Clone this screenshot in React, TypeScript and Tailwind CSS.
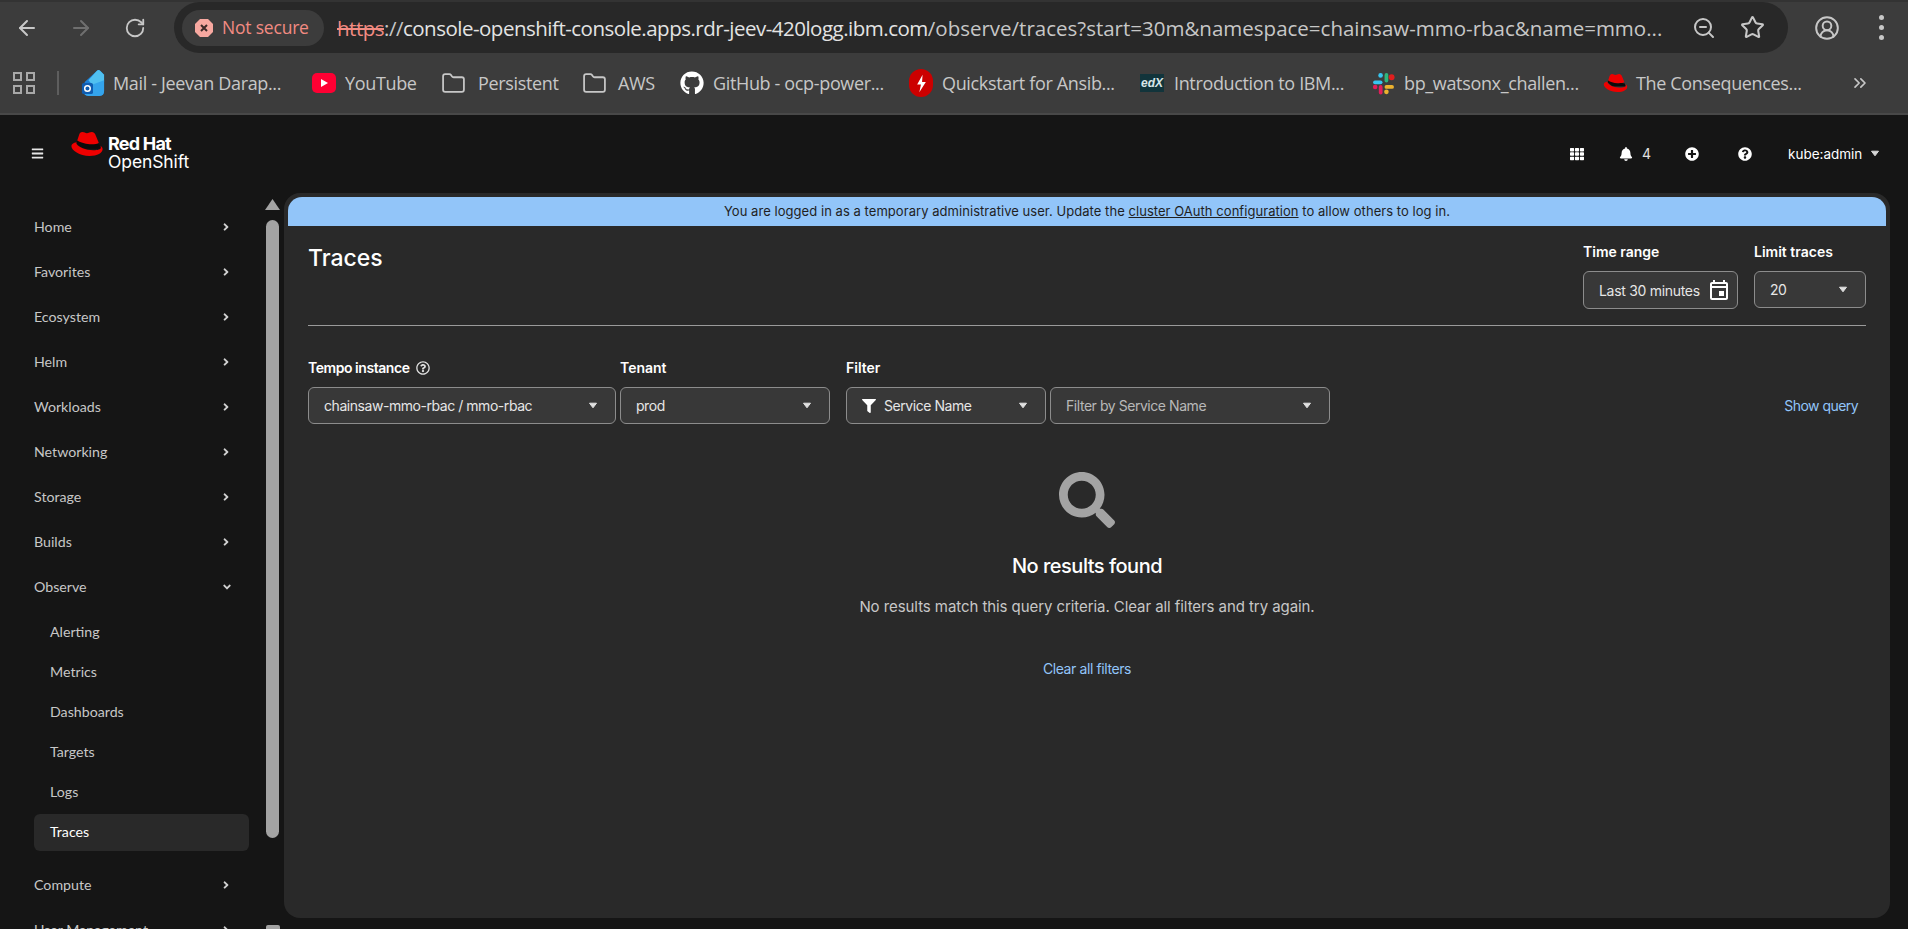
import React from "react";
import { ArrowLeft, ArrowRight, RotateCw, Folder, ZoomOut, Star, ChevronsRight, CircleUserRound } from "lucide-react";
import { FaBell, FaPlusCircle, FaQuestionCircle, FaTh, FaFilter, FaSearch, FaAngleRight, FaAngleDown, FaBars, FaGithub, FaRegQuestionCircle } from "react-icons/fa";
import { MdOutlineEvent } from "react-icons/md";

function Hat({ className }: { className: string }) {
  return (
    <svg viewBox="0 0 32 25" className={className}>
      <path fill="#0b0b0b" d="M6.5 9 L28 13 L29 17 L12 17 L6 12 Z" />
      <path fill="#ee0000" d="M20.5 1c-1.7 0-3 1.2-4.6 1.2C14.4 2.2 13.4 1 11.6 1 9.8 1 8.9 2.2 8.3 4L6.6 9.2c2.4 1.6 7 3.2 12 3.5 4 .2 7.600-.4 8.700-1.500L24.500 4.500C23.700 2.200 22.500 1 20.500 1z" />
      <path fill="#ee0000" d="M6 10.700C2.800 11.300 1 12.600 1 14.500 1 18.800 8.800 24 18.500 24 26 24 31 21 31 17.500c0-1.500-.9-2.500-2-3.300.3.700.4 1.100.4 1.600 0 1.700-2.900 2.700-7.400 2.700C14.500 18.500 8 15.500 6 12.500c-.3-.5-.2-1.200 0-1.800z" />
    </svg>
  );
}

function Slack() {
  return (
    <svg viewBox="0 0 24 24" className="w-[25px] h-[25px] shrink-0">
      <rect x="2" y="9" width="9" height="3.600" rx="1.800" fill="#36c5f0" />
      <circle cx="9.200" cy="4.200" r="2.200" fill="#36c5f0" />
      <rect x="13" y="2" width="3.600" height="9" rx="1.800" fill="#2eb67d" />
      <circle cx="19.800" cy="6" r="2.800" fill="#e01e1e" />
      <rect x="13" y="13.500" width="9" height="3.600" rx="1.800" fill="#ecb22e" />
      <circle cx="14.800" cy="20" r="2.200" fill="#ecb22e" />
      <rect x="7.500" y="13.500" width="3.600" height="9" rx="1.800" fill="#e01e5a" />
      <circle cx="4" cy="15.300" r="2.200" fill="#e01e5a" />
    </svg>
  );
}

function Outlook() {
  return (
    <svg viewBox="0 0 26 30" className="w-[24px] h-[28px] shrink-0">
      <path fill="#1c7fd8" d="M4 14 L17 2 Q19 0 21 2 L25 6 V24 Q25 29 20 29 H8 Q3 29 3 24 Z" />
      <path fill="#50c0f0" d="M17 2 Q19 0 21 2 L25 6 V14 L15 20 L8 12 Z" />
      <path fill="#34a4ec" d="M3 20 L14 16 L25 12 V24 Q25 29 20 29 H8 Q3 29 3 24 Z" />
      <rect x="1" y="15" width="12" height="12" rx="2" fill="#0f5cb0" />
      <circle cx="7" cy="21" r="3" fill="none" stroke="#ffffff" strokeWidth="1.600" />
    </svg>
  );
}

function Octagon() {
  return (
    <svg viewBox="0 0 20 20" className="w-[20px] h-[20px] shrink-0">
      <path fill="#f7a8a0" d="M6 1 H14 L19 6 V14 L14 19 H6 L1 14 V6 Z" />
      <path d="M7 7 L13 13 M13 7 L7 13" stroke="#3c2a28" strokeWidth="2" />
    </svg>
  );
}

function Caret({ className }: { className: string }) {
  return (
    <svg viewBox="0 0 10 7" className={"w-[10px] h-[7px] shrink-0 " + className}>
      <path d="M1.500 1.200 H8.500 L5 5.800 Z" fill="currentColor" stroke="currentColor" strokeWidth="1" strokeLinejoin="round" />
    </svg>
  );
}

function Bookmark({ icon, label, className }: { icon: React.ReactNode; label: string; className: string }) {
  return (
    <div className={"flex items-center shrink-0 " + className}>
      {icon}
      <span className="text-[18px] leading-[24px] text-[#c7c7c7] whitespace-nowrap [font-family:'Open_Sans',sans-serif] tracking-[-0.35px]">{label}</span>
    </div>
  );
}

function ChromeBars() {
  return (
    <div className="shrink-0">
      <div className="h-[53px] bg-[#3c3c3c] border-t-2 border-[#333333] flex items-center">
        <div className="w-[54px] flex justify-center"><ArrowLeft className="w-[24px] h-[24px] text-[#c7c7c7]" strokeWidth={2} /></div>
        <div className="w-[54px] flex justify-center"><ArrowRight className="w-[24px] h-[24px] text-[#6f6f6f]" strokeWidth={2} /></div>
        <div className="w-[54px] flex justify-center"><RotateCw className="w-[22px] h-[22px] text-[#c7c7c7]" strokeWidth={2} /></div>
        <div className="ml-[12px] w-[1614px] h-[51px] rounded-full bg-[#282828] flex items-center pl-[8px]">
          <div className="w-[142px] h-[36px] rounded-full bg-[#3c3c3c] flex items-center pl-[12px] gap-[8px] shrink-0">
            <Octagon />
            <span className="text-[#f28b82] text-[17.500px] font-medium whitespace-nowrap [font-family:'Open_Sans',sans-serif] tracking-[-0.2px]">Not secure</span>
          </div>
          <div className="ml-[13px] w-[1330px] shrink-0 text-[20.500px] leading-[30px] whitespace-nowrap overflow-hidden [font-family:'Open_Sans',sans-serif] tracking-[-0.5px]">
            <span className="text-[#f28b82] line-through">https</span>
            <span className="text-[#c7c7c7]">://</span>
            <span className="text-[#e3e3e3]">console-openshift-console.apps.rdr-jeev-420logg.ibm.com</span>
            <span className="text-[#c7c7c7] tracking-[0px]">/observe/traces?start=30m&amp;namespace=chainsaw-mmo-rbac&amp;name=mmo...</span>
          </div>
          <ZoomOut className="ml-[25px] w-[24px] h-[24px] text-[#c7c7c7] shrink-0" strokeWidth={2} />
          <Star className="ml-[24px] w-[25px] h-[25px] text-[#c7c7c7] shrink-0" strokeWidth={2} />
        </div>
        <div className="ml-[12px] w-[54px] flex justify-center"><CircleUserRound className="w-[26px] h-[26px] text-[#c7c7c7]" strokeWidth={1.800} /></div>
        <div className="w-[54px] flex flex-col items-center gap-[5px]">
          <span className="w-[5px] h-[5px] rounded-full bg-[#c7c7c7]" />
          <span className="w-[5px] h-[5px] rounded-full bg-[#c7c7c7]" />
          <span className="w-[5px] h-[5px] rounded-full bg-[#c7c7c7]" />
        </div>
      </div>
      <div className="h-[62px] bg-[#3c3c3c] border-b-2 border-[#484848] flex items-center">
        <div className="ml-[13px] w-[22px] h-[22px] grid grid-cols-2 gap-[4px] shrink-0">
          <span className="border-2 border-[#a8a8a8]" />
          <span className="border-2 border-[#a8a8a8]" />
          <span className="border-2 border-[#a8a8a8]" />
          <span className="border-2 border-[#a8a8a8]" />
        </div>
        <span className="ml-[22px] w-[2px] h-[24px] bg-[#5e5e5e] shrink-0" />
        <Bookmark className="ml-[22px] w-[231px] gap-[8px]" icon={<Outlook />} label="Mail - Jeevan Darap..." />
        <Bookmark className="w-[129px] gap-[9px]" icon={<span className="w-[24px] h-[20px] rounded-[5px] bg-[#ff0033] flex items-center justify-center"><span className="w-0 h-0 border-y-[4px] border-y-transparent border-l-[7px] border-l-white" /></span>} label="YouTube" />
        <Bookmark className="w-[141px] gap-[12px]" icon={<Folder className="w-[25px] h-[25px] text-[#c7c7c7]" strokeWidth={1.700} />} label="Persistent" />
        <Bookmark className="w-[98px] gap-[11px]" icon={<Folder className="w-[25px] h-[25px] text-[#c7c7c7]" strokeWidth={1.700} />} label="AWS" />
        <Bookmark className="w-[229px] gap-[9px]" icon={<FaGithub className="w-[24px] h-[24px] text-white" />} label="GitHub - ocp-power..." />
        <Bookmark className="w-[231px] gap-[9px]" icon={<span className="w-[24px] h-[28px] rounded-full bg-[#cc0000] flex items-center justify-center"><svg viewBox="0 0 12 16" className="w-[13px] h-[19px]"><path fill="#ffffff" d="M7 0 L2 9 H5.500 L4 16 L10 6.500 H6.500 Z" /></svg></span>} label="Quickstart for Ansib..." />
        <Bookmark className="w-[231px] gap-[10px]" icon={<span className="w-[24px] h-[18px] bg-[#12343b] text-[#d8e6e8] text-[12px] leading-[18px] italic font-bold text-center [font-family:'Liberation_Sans',sans-serif]">edX</span>} label="Introduction to IBM..." />
        <Bookmark className="w-[232px] gap-[8px]" icon={<Slack />} label="bp_watsonx_challen..." />
        <Bookmark className="w-[247px] gap-[8px]" icon={<Hat className="w-[25px] h-[20px] shrink-0" />} label="The Consequences..." />
        <ChevronsRight className="w-[20px] h-[20px] text-[#c7c7c7] shrink-0" strokeWidth={2} />
      </div>
    </div>
  );
}

function Masthead() {
  return (
    <div className="h-[78px] shrink-0 flex items-center text-[#e0e0e0] pr-[28px] pb-[1px]">
      <FaBars className="ml-[31px] w-[13px] h-[13px] text-[#e6e6e6] shrink-0" />
      <div className="ml-[26px] flex items-start relative">
        <Hat className="w-[34px] h-[26px] mt-[-6px] shrink-0" />
        <div className="ml-[4px] flex flex-col mt-[-2px] text-white [font-family:'Inter',sans-serif]">
          <span className="text-[18px] leading-[18px] font-bold tracking-[-0.8px]">Red Hat</span>
          <span className="text-[17.500px] leading-[18px] font-normal tracking-[-0.1px]">OpenShift</span>
        </div>
      </div>
      <FaTh className="ml-auto w-[14px] h-[14px] text-white shrink-0" />
      <FaBell className="ml-[35px] w-[14px] h-[14px] text-white shrink-0" />
      <span className="ml-[9px] w-[8px] text-[14px] leading-[20px] text-[#e0e0e0] [font-family:'Inter',sans-serif]">4</span>
      <FaPlusCircle className="ml-[35px] w-[14px] h-[14px] text-white shrink-0" />
      <FaQuestionCircle className="ml-[39px] w-[14px] h-[14px] text-white shrink-0" />
      <span className="ml-[36px] w-[72px] whitespace-nowrap text-[13.500px] leading-[20px] text-white [font-family:'Inter',sans-serif]">kube:admin</span>
      <Caret className="ml-[10px] text-[#d8d8d8]" />
    </div>
  );
}

function NavItem({ label, open }: { label: string; open?: boolean }) {
  return (
    <div className="h-[45px] flex items-center justify-between pl-[34px] pr-[30px] text-[14.200px] text-[#c7c7c7]">
      <span>{label}</span>
      {open ? <FaAngleDown className="w-[12px] h-[12px] text-[#d0d0d0] mr-[-1px]" /> : <FaAngleRight className="w-[12px] h-[12px] text-[#d0d0d0]" />}
    </div>
  );
}

function SubItem({ label, active }: { label: string; active?: boolean }) {
  return (
    <div className="h-[40px] flex items-center ml-[34px] mr-[13px]">
      <div className={active ? "w-full h-[37px] flex items-center pl-[16px] rounded-[6px] bg-[#292929] text-white text-[14.200px]" : "w-full pl-[16px] text-[#c7c7c7] text-[14.200px]"}>{label}</div>
    </div>
  );
}

function Sidebar() {
  return (
    <aside className="w-[284px] shrink-0 flex [font-family:'Lato',sans-serif] overflow-hidden">
      <div className="w-[262px] shrink-0 pt-[11px]">
        {["Home", "Favorites", "Ecosystem", "Helm", "Workloads", "Networking", "Storage", "Builds"].map((l) => (
          <NavItem key={l} label={l} />
        ))}
        <NavItem label="Observe" open />
        <div className="pt-[3px] pb-[10px]">
          {["Alerting", "Metrics", "Dashboards", "Targets", "Logs"].map((l) => (
            <SubItem key={l} label={l} />
          ))}
          <SubItem label="Traces" active />
        </div>
        <NavItem label="Compute" />
        <NavItem label="User Management" />
      </div>
      <div className="w-[15px] ml-[3px] shrink-0 flex flex-col items-center pt-[6px]">
        <span className="w-[15px] h-[11px] shrink-0 bg-[#a3a3a3] [clip-path:polygon(50%_0,100%_100%,0_100%)]" />
        <span className="mt-[10px] w-[13px] h-[618px] rounded-full bg-[#a3a3a3] shrink-0" />
        <span className="mt-[87px] w-[14px] h-[20px] rounded-[2px] bg-[#a3a3a3] shrink-0" />
      </div>
    </aside>
  );
}

function Select({ className, label, muted, icon }: { className: string; label: string; muted?: boolean; icon?: React.ReactNode }) {
  return (
    <div className={"h-[37px] border border-[#8c8c8c] rounded-[6px] bg-[#383838] flex items-center pl-[15px] pr-[17px] text-[14px] tracking-[-0.45px] shrink-0 " + className}>
      {icon}
      <span className={muted ? "text-[#b8b8b8] whitespace-nowrap" : "text-[#e6e6e6] whitespace-nowrap"}>{label}</span>
      <Caret className="ml-auto text-[#e0e0e0]" />
    </div>
  );
}

function Label({ children, className }: { children: React.ReactNode; className?: string }) {
  return <div className={"h-[20px] mb-[9px] text-[14px] leading-[20px] font-semibold text-white whitespace-nowrap flex items-center " + (className ?? "")}>{children}</div>;
}

function Main() {
  return (
    <main className="w-[1606px] h-[725px] shrink-0 rounded-[16px] bg-[#292929] p-[4px] [font-family:'Inter',sans-serif]">
      <div className="h-[29px] rounded-t-[14px] bg-[#92c5f9] flex items-center justify-center text-[13px] text-[#1f1f1f] whitespace-nowrap tracking-[0.05px]">
        <span>You are logged in as a temporary administrative user. Update the <span className="underline">cluster OAuth configuration</span> to allow others to log in.</span>
      </div>
      <div className="px-[20px]">
        <div className="pt-[16px] flex items-start">
          <h1 className="text-[23px] leading-[32px] font-medium text-white">Traces</h1>
          <div className="ml-auto flex gap-[16px]">
            <div>
              <Label>Time range</Label>
              <div className="w-[155px] h-[38px] border border-[#8c8c8c] rounded-[6px] bg-[#383838] flex items-center pl-[15px] text-[14px] tracking-[-0.3px] text-[#e6e6e6] whitespace-nowrap">
                <span>Last 30 minutes</span>
                <MdOutlineEvent className="ml-[7px] w-[24px] h-[24px] text-white shrink-0" />
              </div>
            </div>
            <div>
              <Label>Limit traces</Label>
              <Select className="w-[112px]" label="20" />
            </div>
          </div>
        </div>
        <div className="mt-[16px] h-px bg-[#9a9a9a]" />
        <div className="mt-[32px] flex items-end">
          <div className="w-[308px]">
            <Label className="tracking-[-0.45px]">Tempo instance <FaRegQuestionCircle className="ml-[6px] w-[14px] h-[14px] text-[#e0e0e0]" /></Label>
            <Select className="w-[308px]" label="chainsaw-mmo-rbac / mmo-rbac" />
          </div>
          <div className="ml-[4px] w-[210px]">
            <Label>Tenant</Label>
            <Select className="w-[210px]" label="prod" />
          </div>
          <div className="ml-[16px]">
            <Label>Filter</Label>
            <div className="flex gap-[4px]">
              <Select className="w-[200px]" label="Service Name" icon={<FaFilter className="w-[14px] h-[14px] text-white mr-[8px] shrink-0" />} />
              <Select className="w-[280px]" label="Filter by Service Name" muted />
            </div>
          </div>
          <div className="ml-auto mr-[8px] h-[37px] flex items-center text-[14px] tracking-[-0.55px] text-[#92c5f9] whitespace-nowrap">Show query</div>
        </div>
        <div className="flex flex-col items-center">
          <FaSearch className="mt-[48px] w-[56px] h-[56px] text-[#a3a3a3]" />
          <h2 className="mt-[24px] text-[20px] leading-[28px] font-medium tracking-[-0.5px] text-white">No results found</h2>
          <p className="mt-[17px] text-[15px] leading-[20px] tracking-[-0.07px] text-[#c7c7c7]">No results match this query criteria. Clear all filters and try again.</p>
          <div className="mt-[42px] text-[14px] leading-[20px] tracking-[-0.4px] text-[#92c5f9]">Clear all filters</div>
        </div>
      </div>
    </main>
  );
}

export default function App() {
  return (
    <div className="w-[1908px] h-[929px] overflow-hidden bg-[#151515] flex flex-col">
      <ChromeBars />
      <Masthead />
      <div className="flex flex-1 min-h-0">
        <Sidebar />
        <Main />
      </div>
    </div>
  );
}
